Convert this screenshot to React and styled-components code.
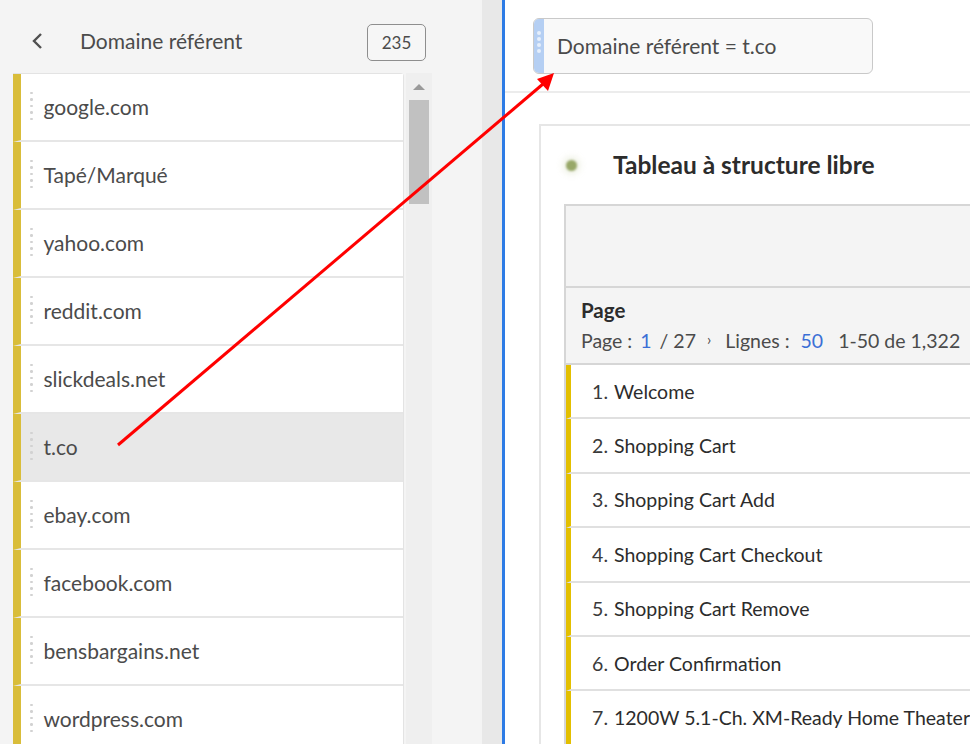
import styled, { createGlobalStyle } from "styled-components";

const GlobalStyle = createGlobalStyle`
  html, body {
    margin: 0;
    padding: 0;
    background: #ffffff;
  }
  body {
    font-family: "Lato", "Open Sans", sans-serif;
    color: #4b4b4b;
  }
`;

const domains = [
  "google.com",
  "Tapé/Marqué",
  "yahoo.com",
  "reddit.com",
  "slickdeals.net",
  "t.co",
  "ebay.com",
  "facebook.com",
  "bensbargains.net",
  "wordpress.com",
];

const pages = [
  "Welcome",
  "Shopping Cart",
  "Shopping Cart Add",
  "Shopping Cart Checkout",
  "Shopping Cart Remove",
  "Order Confirmation",
  "1200W 5.1-Ch. XM-Ready Home Theater",
];

const Screen = styled.div`
  position: relative;
  display: flex;
  width: 970px;
  height: 744px;
  overflow: hidden;
`;

// left rail
const LeftPanel = styled.div`
  width: 482px;
  flex-shrink: 0;
  background: #f4f4f4;
  display: flex;
  flex-direction: column;
`;

const Header = styled.div`
  height: 73px;
  flex-shrink: 0;
  display: flex;
  align-items: center;
  padding: 11px 56px 0 31px;
  box-sizing: border-box;
`;

const Back = styled.div`
  width: 14px;
  height: 18px;
  margin-right: 35px;
  margin-top: -2px;
  display: flex;
`;

const HeaderTitle = styled.div`
  flex: 1;
  font-size: 21px;
  color: #4b4b4b;
  margin-top: -3px;
`;

const Count = styled.div`
  width: 59px;
  height: 37px;
  box-sizing: border-box;
  border: 1px solid #8e8e8e;
  border-radius: 5px;
  display: flex;
  align-items: center;
  justify-content: center;
  font-size: 17px;
  color: #4b4b4b;
  background: #f6f6f6;
`;

const ListArea = styled.div`
  flex: 1;
  display: flex;
  padding-left: 13px;
  min-height: 0;
`;

const List = styled.div`
  width: 391px;
  background: #ffffff;
  border-top: 1px solid #e3e3e3;
  border-right: 1px solid #e3e3e3;
  border-top-right-radius: 4px;
  box-sizing: border-box;
`;

const Row = styled.div`
  height: 68px;
  box-sizing: border-box;
  display: flex;
  align-items: center;
  border-left: 8px solid #d9bd3a;
  border-bottom: 2px solid #e6e6e6;
  background: ${(p) => (p.selected ? "#e8e8e8" : "#ffffff")};
  padding-left: 9px;
`;

const Grip = styled.div`
  display: flex;
  flex-direction: column;
  gap: 4px;
  margin-right: 11px;
  margin-top: -2px;
`;

const Dot = styled.span`
  width: 2.5px;
  height: 2.5px;
  border-radius: 50%;
  background: #d2d2d2;
`;

const RowLabel = styled.div`
  font-size: 21px;
  color: #4b4b4b;
  margin-top: -2px;
`;

const Track = styled.div`
  width: 26px;
  margin-left: 2px;
  background: #efefef;
  display: flex;
  flex-direction: column;
  align-items: center;
  padding-top: 11px;
`;

const UpArrow = styled.div`
  width: 0;
  height: 0;
  border-left: 6px solid transparent;
  border-right: 6px solid transparent;
  border-bottom: 6px solid #9a9a9a;
`;

const Thumb = styled.div`
  width: 20px;
  height: 104px;
  margin-top: 10px;
  background: #c1c1c1;
`;

const Gutter = styled.div`
  width: 20px;
  flex-shrink: 0;
  background: #e8e8e8;
  border-right: 3px solid #2d7be5;
`;

// right workspace
const Workspace = styled.div`
  flex: 1;
  background: #ffffff;
  display: flex;
  flex-direction: column;
`;

const FilterBar = styled.div`
  height: 93px;
  flex-shrink: 0;
  box-sizing: border-box;
  border-bottom: 2px solid #ececec;
  padding: 18px 0 0 28px;
`;

const Pill = styled.div`
  width: 340px;
  height: 56px;
  box-sizing: border-box;
  border: 1px solid #c9c9c9;
  border-radius: 6px;
  background: #f9f9f9;
  display: flex;
  align-items: center;
  overflow: hidden;
`;

const Handle = styled.div`
  width: 10px;
  align-self: stretch;
  background: #b5cff3;
  display: flex;
  flex-direction: column;
  align-items: center;
  padding-top: 12px;
  gap: 2px;
`;

const HandleDot = styled.span`
  width: 4px;
  height: 4px;
  border-radius: 50%;
  background: #e6effc;
`;

const PillText = styled.div`
  font-size: 21px;
  color: #4b4b4b;
  margin-left: 13px;
  margin-top: -1px;
`;

const Canvas = styled.div`
  flex: 1;
  min-height: 0;
  padding: 31px 0 0 34px;
`;

const Card = styled.div`
  height: 100%;
  border-top: 2px solid #e6e6e6;
  border-left: 2px solid #e6e6e6;
  padding-left: 23px;
  box-sizing: border-box;
`;

const CardHead = styled.div`
  height: 78px;
  display: flex;
  align-items: center;
`;

const StatusDot = styled.div`
  width: 11px;
  height: 11px;
  border-radius: 50%;
  background: #98a868;
  filter: blur(1px);
  margin: 0 36px 0 2px;
  box-shadow: 0 0 6px 3px rgba(200, 210, 170, 0.35);
`;

const CardTitle = styled.div`
  font-size: 24.5px;
  font-weight: 700;
  color: #2c2c2c;
  margin-top: -2px;
`;

const Table = styled.div`
  border-left: 2px solid #d6d6d6;
`;

const ColumnHead = styled.div`
  height: 84px;
  background: #f4f4f4;
  border-top: 2px solid #d6d6d6;
  border-bottom: 2px solid #d6d6d6;
  box-sizing: border-box;
`;

const DimHead = styled.div`
  height: 77px;
  background: #f4f4f4;
  border-bottom: 2px solid #d6d6d6;
  box-sizing: border-box;
  padding: 10px 0 0 15px;
`;

const DimName = styled.div`
  font-size: 20.5px;
  font-weight: 700;
  color: #2c2c2c;
`;

const Pager = styled.div`
  margin-top: 7px;
  font-size: 19.5px;
  color: #4b4b4b;
  white-space: nowrap;
  display: flex;
  align-items: center;
`;

const Link = styled.span`
  color: #3b6fd6;
  margin: 0 ${(p) => p.right || 0}px 0 ${(p) => p.left || 0}px;
`;

const Chevron = styled.span`
  font-size: 15px;
  margin: -4px 14px 0 11px;
`;

const PageRow = styled.div`
  height: 54.4px;
  box-sizing: border-box;
  display: flex;
  align-items: center;
  border-left: 5px solid #e3bf00;
  border-bottom: 2px solid #e0e0e0;
  font-size: 19.5px;
  color: #2c2c2c;
  white-space: nowrap;
`;

const Num = styled.span`
  width: 37px;
  text-align: right;
  margin-right: 6px;
  color: #3a3a3a;
`;

const Overlay = styled.svg`
  position: absolute;
  left: 0;
  top: 0;
  pointer-events: none;
`;

export default function App() {
  return (
    <Screen>
      <GlobalStyle />
      <LeftPanel>
        <Header>
          <Back>
            <svg width="14" height="18" viewBox="0 0 14 18">
              <polyline points="10,2 3,9 10,16" fill="none" stroke="#505050" strokeWidth="2.4" />
            </svg>
          </Back>
          <HeaderTitle>Domaine référent</HeaderTitle>
          <Count>235</Count>
        </Header>
        <ListArea>
          <List>
            {domains.map((d) => (
              <Row key={d} selected={d === "t.co"}>
                <Grip>
                  {[0, 1, 2, 3, 4].map((i) => (
                    <Dot key={i} />
                  ))}
                </Grip>
                <RowLabel>{d}</RowLabel>
              </Row>
            ))}
          </List>
          <Track>
            <UpArrow />
            <Thumb />
          </Track>
        </ListArea>
      </LeftPanel>
      <Gutter />
      <Workspace>
        <FilterBar>
          <Pill>
            <Handle>
              {[0, 1, 2, 3].map((i) => (
                <HandleDot key={i} />
              ))}
            </Handle>
            <PillText>Domaine référent = t.co</PillText>
          </Pill>
        </FilterBar>
        <Canvas>
          <Card>
            <CardHead>
              <StatusDot />
              <CardTitle>Tableau à structure libre</CardTitle>
            </CardHead>
            <Table>
              <ColumnHead />
              <DimHead>
                <DimName>Page</DimName>
                <Pager>
                  Page :<Link left={8} right={8}>1</Link>/ 27
                  <Chevron>›</Chevron>
                  Lignes :<Link left={11} right={15}>50</Link>1-50 de 1,322
                </Pager>
              </DimHead>
              {pages.map((p, i) => (
                <PageRow key={p}>
                  <Num>{i + 1}.</Num>
                  {p}
                </PageRow>
              ))}
            </Table>
          </Card>
        </Canvas>
      </Workspace>
      <Overlay width="970" height="744">
        <line x1="118" y1="445" x2="543" y2="84" stroke="#ff0000" strokeWidth="3" />
        <polygon points="554,73 537,79 548,91" fill="#ff0000" />
      </Overlay>
    </Screen>
  );
}
